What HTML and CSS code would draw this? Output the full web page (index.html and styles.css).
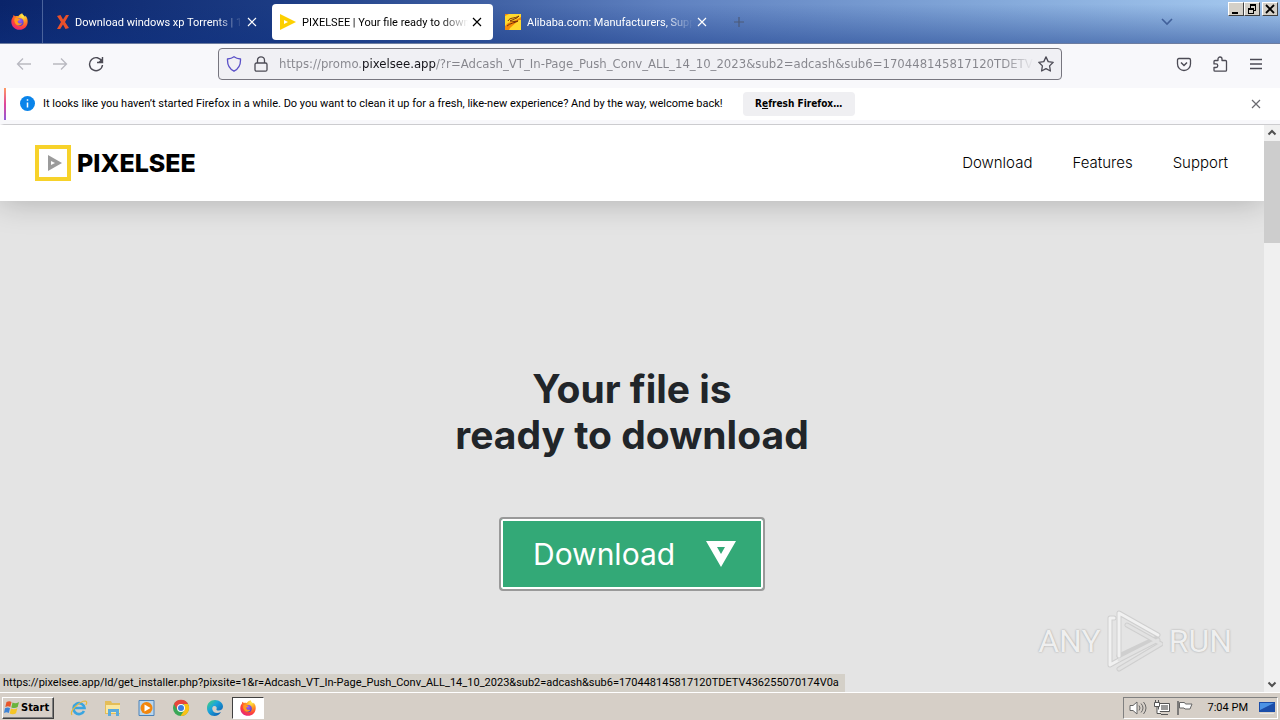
FILE: index.html
```
<!DOCTYPE html>
<html lang="en">
<head>
<meta charset="utf-8">
<title>PIXELSEE | Your file ready to download</title>
<link rel="stylesheet" href="styles.css">
</head>
<body>
<svg class="defs" width="0" height="0" aria-hidden="true">
  <defs>
    <radialGradient id="foxFlame" cx="70%" cy="15%" r="95%"><stop offset="0" stop-color="#fff04a"/><stop offset=".35" stop-color="#ff9a1f"/><stop offset=".7" stop-color="#ff4438"/><stop offset="1" stop-color="#e0208a"/></radialGradient>
    <radialGradient id="foxGlobe" cx="50%" cy="30%" r="70%"><stop offset="0" stop-color="#a05cff"/><stop offset="1" stop-color="#4a3fc4"/></radialGradient>
    <linearGradient id="edge" x1="0" y1="0" x2="1" y2="1"><stop offset="0" stop-color="#4fd66a"/><stop offset=".4" stop-color="#1ba5dc"/><stop offset="1" stop-color="#0b4fa8"/></linearGradient>
    <symbol id="firefox" viewBox="0 0 16 16">
      <path fill="url(#foxFlame)" d="M10.6.3c.3 1.500 1.500 2 2.600 3.200.3-.2.3-.7.2-1.100C15 4 15.800 6 15.700 8.400 15.500 12.700 12.200 15.800 8 15.800S.4 12.600.3 8.400C.2 6.300 1 4.700 2 3.500c0-.7.200-1.300.5-1.700.4.600 1 1 1.500 1.200 1-.3 2-.2 2.900.1C7.600 1.800 9 .7 10.600.3z"/>
      <circle cx="8.200" cy="8.600" r="3.600" fill="url(#foxGlobe)"/>
      <path fill="#ff9a1f" d="M3.400 5.200c1.200-.7 2.400-.5 3.600.3l1.600.4c-.2.800-1 1-1.800 1.300-.6.300-.5 1-.3 1.500.7 1.400 2.600 1.300 3.900.8-.8 2.200-3.300 2.800-5.100 1.700C3.600 10 2.700 7.400 3.400 5.200z"/>
    </symbol>
    <symbol id="close" viewBox="0 0 10 10"><path d="M1 1l8 8M9 1L1 9" fill="none" stroke="currentColor" stroke-width="1.200"/></symbol>
  </defs>
</svg>

<header class="titlebar">
  <button class="fx-view" aria-label="Firefox View"><svg width="17" height="17"><use href="#firefox"/></svg></button>
  <div class="tabs" role="tablist">
    <div class="tab" role="tab">
      <svg width="12" height="14" viewBox="0 0 12 14"><path fill="#e8502a" d="M0 1l3.500-1L6 4.500 9 0h3L8 7l4 6-3.500 1L6 9.500 3.200 14H0l4-7z"/></svg>
      <span class="tab-title">Download windows xp Torrents | 1</span>
      <button class="tab-close" aria-label="Close tab"><svg width="10" height="10"><use href="#close"/></svg></button>
    </div>
    <div class="tab tab-active" role="tab" aria-selected="true">
      <svg width="16" height="16" viewBox="0 0 16 16"><path fill="#fdd000" fill-rule="evenodd" d="M0 0l16 8-16 8zM4 6v4l4-2z"/></svg>
      <span class="tab-title">PIXELSEE | Your file ready to downl</span>
      <button class="tab-close" aria-label="Close tab"><svg width="10" height="10"><use href="#close"/></svg></button>
    </div>
    <div class="tab" role="tab">
      <svg width="16" height="16" viewBox="0 0 16 16"><path fill="#f58a07" d="M0 0h16v16H0z"/><path fill="#ffd92e" d="M0 2l4-2h12v3L9 7 3 9 0 12zM5 14l9-8h2v10H4z"/><path d="M3 7c2-4 6-2 11-5-2 3-6 3-9 5 3 0 5 1 8 0-3 2-8 2-11 5" fill="none" stroke="#7a3008" stroke-width="1"/></svg>
      <span class="tab-title">Alibaba.com: Manufacturers, Supp</span>
      <button class="tab-close" aria-label="Close tab"><svg width="10" height="10"><use href="#close"/></svg></button>
    </div>
    <button class="new-tab" aria-label="New tab"><svg width="10" height="10" viewBox="0 0 10 10"><path d="M5 0v10M0 5h10" stroke="#4c5a78" stroke-width="1.200"/></svg></button>
  </div>
  <button class="all-tabs" aria-label="List all tabs"><svg width="12" height="8" viewBox="0 0 12 8"><path d="M1 1l5 5 5-5" fill="none" stroke="#41609a" stroke-width="1.600"/></svg></button>
  <div class="window-buttons">
    <button aria-label="Minimize"><svg width="12" height="10" viewBox="0 0 12 10"><path d="M2 8h6v2H2z"/></svg></button>
    <button aria-label="Restore"><svg width="12" height="10" viewBox="0 0 12 10"><path fill-rule="evenodd" d="M4 0h6v7H8v3H2V4h2zM5 2v2h3v2h1V2zM3 6v3h4V6z"/></svg></button>
    <button class="window-close" aria-label="Close"><svg width="12" height="10" viewBox="0 0 12 10"><path d="M2 1l8 8M10 1L2 9" stroke="#000" stroke-width="1.800"/></svg></button>
  </div>
</header>

<nav class="toolbar" aria-label="Navigation">
  <div class="nav-buttons">
    <button class="dim" aria-label="Back"><svg width="16" height="16" viewBox="0 0 16 16"><path d="M15 8H2M7 2.500L1.500 8 7 13.500"/></svg></button>
    <button class="dim" aria-label="Forward"><svg width="16" height="16" viewBox="0 0 16 16"><path d="M1 8h13M9 2.500L14.500 8 9 13.500"/></svg></button>
    <button aria-label="Reload"><svg width="16" height="16" viewBox="0 0 16 16"><path d="M14 5.500A6.500 6.500 0 1 0 14.500 9M14.500 1v5.500H9" stroke-width="1.400"/><path d="M14.500 2v4.500H10z" fill="currentColor" stroke="none"/></svg></button>
  </div>
  <div class="urlbar">
    <svg class="shield" width="16" height="16" viewBox="0 0 16 16"><path d="M8 .8c2 1.500 4.200 2 6.500 2.200.3 6-2 10-6.500 12.200C3.500 13 1.200 9 1.500 3 3.800 2.800 6 2.300 8 .8z"/></svg>
    <svg class="lock" width="14" height="16" viewBox="0 0 14 16"><rect x="1" y="7" width="12" height="8.200" rx="1.500"/><path d="M3.500 7V4.300a3.500 3.500 0 0 1 7 0V7"/></svg>
    <input type="text" aria-label="Address" value="https://promo.pixelsee.app/?r=Adcash_VT_In-Page_Push_Conv_ALL_14_10_2023&amp;sub2=adcash&amp;sub6=170448145817120TDETV436255070174V0a">
    <button aria-label="Bookmark"><svg width="16" height="16" viewBox="0 0 16 16"><path stroke-linejoin="round" d="M8 .9l2.200 4.700 5 .7-3.600 3.600.8 5.100L8 12.600 3.600 15l.8-5.100L.8 6.300l5-.7z"/></svg></button>
  </div>
  <div class="nav-buttons nav-end">
    <button aria-label="Save to Pocket"><svg width="16" height="16" viewBox="0 0 16 16"><path d="M3 2.500h10c1 0 1.500.6 1.500 1.500v4a6.500 6.500 0 0 1-13 0V4c0-.9.500-1.500 1.500-1.500z"/><path d="M5 6.500l3 3 3-3" stroke-width="1.500"/></svg></button>
    <button aria-label="Extensions"><svg width="16" height="16" viewBox="0 0 16 16"><path stroke-linejoin="round" d="M3 4.500h3V3a2 2 0 0 1 4 0v1.500h3.500c.6 0 1 .4 1 1v8.700c0 .6-.4 1-1 1H3c-.6 0-1-.4-1-1v-2.700h2a1.800 1.800 0 0 0 0-3.600H2V5.500c0-.6.400-1 1-1z"/></svg></button>
    <button aria-label="Menu"><svg width="16" height="16" viewBox="0 0 16 16"><path d="M2 3.500h12M2 8h12M2 12.500h12"/></svg></button>
  </div>
</nav>

<div class="notice">
  <svg width="15" height="15" viewBox="0 0 15 15"><circle cx="7.500" cy="7.500" r="7.500" fill="#0a84ea"/><path d="M7.500 3.200v1.600M7.500 6.400v5.200" stroke="#fff" stroke-width="1.500"/></svg>
  <span>It looks like you haven’t started Firefox in a while. Do you want to clean it up for a fresh, like-new experience? And by the way, welcome back!</span>
  <button class="refresh">R<u>e</u>fresh Firefox…</button>
  <button class="notice-close" aria-label="Dismiss"><svg width="10" height="10"><use href="#close"/></svg></button>
</div>

<div class="viewport">
  <div class="page">
    <header class="site-header">
      <a class="logo" href="#">
        <svg width="36" height="36" viewBox="0 0 36 36"><path d="M2 2h32v32H2z" fill="#fff" stroke="#f7d22a" stroke-width="4"/><path fill="#9b9b9b" fill-rule="evenodd" d="M13 10l14 8-14 8zM16 16v4l4-2z"/></svg>
        <span>PIXELSEE</span>
      </a>
      <nav class="site-nav" aria-label="Site">
        <a href="#">Download</a><a href="#">Features</a><a href="#">Support</a>
      </nav>
    </header>
    <main class="hero">
      <h1>Your file is<br>ready to download</h1>
      <a class="download" href="#"><span>Download</span>
        <svg width="30" height="26" viewBox="0 0 30 26"><path fill="#fff" fill-rule="evenodd" d="M0 0h30L15 26zM11 6l4 7 4-7z"/></svg>
      </a>
    </main>
    <div class="watermark">
      <span>ANY</span>
      <svg width="56" height="62" viewBox="0 0 56 62"><g fill="none" stroke-linejoin="round" stroke-linecap="round"><g stroke="#cfcfcf" stroke-width="5"><path d="M51 25L12 3v43"/><path d="M7 8H3v47l9-5 39-20M12 46l38-18M12 59l42-25L20 15"/></g><g stroke="#f1f1f1" stroke-width="3"><path d="M51 25L12 3v43"/><path d="M7 8H3v47l9-5"/></g><g stroke="#e2e2e2" stroke-width="3"><path d="M12 50l39-20M12 59l42-25L20 15"/></g></g></svg>
      <span>RUN</span>
    </div>
    <div class="status">https://pixelsee.app/ld/get_installer.php?pixsite=1&amp;r=Adcash_VT_In-Page_Push_Conv_ALL_14_10_2023&amp;sub2=adcash&amp;sub6=170448145817120TDETV436255070174V0a</div>
  </div>
  <div class="scrollbar" aria-hidden="true">
    <svg width="16" height="16" viewBox="0 0 16 16"><path d="M4.500 9.500L8 6l3.500 3.500" fill="none" stroke="#505050" stroke-width="2"/></svg>
    <div class="thumb"></div>
    <svg class="down" width="16" height="16" viewBox="0 0 16 16"><path d="M4.500 6.500L8 10l3.500-3.500" fill="none" stroke="#505050" stroke-width="2"/></svg>
  </div>
</div>

<footer class="taskbar">
  <button class="start"><svg width="16" height="16" viewBox="0 0 16 16"><path fill="#e8562a" d="M2.500 2c2-1 3.500-1 5 0L6.300 7c-1.500-.9-3-.9-5 0z"/><path fill="#6ab43c" d="M8.500 2.500c2 1 4 1 6.500-.5l-1.300 5c-2 1.400-4.200 1.400-6.400.4z"/><path fill="#3d83d6" d="M1 8.200c2-1 3.500-1 5 0L4.800 13c-1.500-1-3-1-4.800 0z"/><path fill="#f5c525" d="M7 8.600c2 1 4 1 6.400-.4L12 13.200c-2 1.300-4.200 1.300-6.300.3z"/></svg>Start</button>
  <div class="quick">
    <button aria-label="Internet Explorer"><svg width="18" height="18" viewBox="0 0 18 18"><path d="M14 12a5.500 5.500 0 1 1 .5-3H5" fill="none" stroke="#3aa5e0" stroke-width="2.600"/><path d="M2 16C-1 12 10 2 15.500 2c2 .5 1 3 .3 4" fill="none" stroke="#e6b93c" stroke-width="1.200"/></svg></button>
    <button aria-label="Explorer"><svg width="18" height="18" viewBox="0 0 18 18"><path fill="#e4bd58" d="M1 2h6l1 2h8v11H1z"/><path fill="#fae7a0" d="M2 6h14v8H2z"/><path fill="#5cabdc" d="M4 10h11v7h-3v-4H7v4H4z"/></svg></button>
    <button aria-label="Media Player"><svg width="18" height="18" viewBox="0 0 18 18"><path fill="#b9d6ee" stroke="#4c82b8" d="M1 1.500h15v15H1z"/><circle cx="8.500" cy="9" r="6" fill="#f2860d"/><path fill="#fff" d="M6.500 5.500l6 3.500-6 3.500z"/></svg></button>
    <button aria-label="Chrome"><svg width="18" height="18" viewBox="0 0 18 18"><circle cx="9" cy="9" r="8" fill="#3aa757"/><path fill="#e8453c" d="M2 5a8 8 0 0 1 14 0H9L5.500 11z"/><path fill="#fbc116" d="M16 5a8 8 0 0 1-7.500 12l4-6L12 5z"/><circle cx="9" cy="9" r="4" fill="#fff"/><circle cx="9" cy="9" r="3" fill="#3b7de0"/></svg></button>
    <button aria-label="Edge"><svg width="18" height="18" viewBox="0 0 18 18"><path fill="url(#edge)" d="M1 9C1 4 4.500 1 9 1s8 3 8 6.500c0 2.500-2 4-4.500 4-1.600 0-2.500-.6-2-1.500.8-1.500-.3-3-2-3-2 0-2.700 2-2 4 1 3 4.500 4 8.500 2-1.500 2.700-4 4-6.500 4C4 17 1 13.500 1 9z"/></svg></button>
    <button class="running" aria-label="Firefox"><svg width="16" height="16"><use href="#firefox"/></svg></button>
  </div>
  <div class="tray">
    <svg width="18" height="16" viewBox="0 0 18 16" fill="none" stroke="#666"><path fill="#fff" d="M1 5.500h3L8 2v12l-4-3.500H1z"/><path d="M10 5.500q2 2.500 0 5M12 3.500q4 4.500 0 9M14.500 2q5 6 0 12"/></svg>
    <svg width="16" height="16" viewBox="0 0 16 16"><path fill="#fff" stroke="#555" d="M4.500 3.500h11v8h-11zM7 14.500h7"/><path fill="#999" d="M7 5h7v5H7z"/><path fill="#fff" stroke="#555" d="M.5 2.500h5v4h-5zM1.500 0v2M4.500 0v2M3 7v6.500h4"/></svg>
    <svg width="16" height="16" viewBox="0 0 16 16" fill="#fff" stroke="#666"><path d="M1 1v14" stroke-width="1.600"/><path d="M2.500 2.500h5l1 1.500H15l-2 5H8L7 8H2.500z"/></svg>
    <time>7:04 PM</time>
    <svg width="16" height="14" viewBox="0 0 16 14"><path fill="#1b4da8" d="M0 1h16v10H0z"/><path fill="#4b92e4" d="M1 2h14L1 9z"/><path fill="#e6e6e6" d="M1 12h14v1H1z"/></svg>
  </div>
</footer>
</body>
</html>
```
FILE: styles.css
```
* { box-sizing: border-box; }

body {
  margin: 0;
  height: 100vh;
  display: flex;
  flex-direction: column;
  overflow: hidden;
  font: 11px/16px Roboto, "Liberation Sans", sans-serif;
  color: #000;
}

.defs { position: absolute; }
svg { display: block; flex: none; }
button { font: inherit; color: inherit; border: 0; padding: 0; margin: 0; background: none; flex: none; }
a { color: inherit; text-decoration: none; }

.titlebar {
  display: flex;
  flex: none;
  height: 44px;
  border-bottom: 1px solid #6d7da0;
  color: #fff;
  background:
    linear-gradient(to bottom, transparent 10%, rgba(15, 50, 130, .45)),
    linear-gradient(to right, #0a246a 0%, #1c3c84 22%, #5f81c0 52%, #84a9da 78%, #a6caf0 100%);
}
.fx-view {
  width: 43px;
  padding-right: 3px;
  display: flex;
  align-items: center;
  justify-content: center;
  border-right: 1px solid #4a639c;
}
.tabs { flex: 1; display: flex; padding: 4px; gap: 4px; min-width: 0; }
.tab {
  width: 221px;
  height: 36px;
  padding: 0 11px 0 8px;
  display: flex;
  align-items: center;
  border-radius: 4px;
}
.tab:first-child { padding-left: 10px; }
.tab-title {
  flex: 1;
  padding-top: 1px;
  margin: 0 4px 0 6px;
  overflow: hidden;
  white-space: nowrap;
  -webkit-mask-image: linear-gradient(to left, transparent, #000 28px);
  mask-image: linear-gradient(to left, transparent, #000 28px);
}
.tab-active { background: #fff; color: #000; }
.new-tab { width: 34px; display: flex; align-items: center; justify-content: center; }
.all-tabs { width: 32px; display: flex; align-items: center; justify-content: center; margin-right: 45px; }
.window-buttons { display: flex; padding: 2px 2px 0 0; height: 18px; }
.window-buttons button {
  width: 16px;
  height: 14px;
  background: #d4d0c8;
  border: 1px solid;
  border-color: #fff #404040 #404040 #fff;
  display: flex;
  align-items: center;
  justify-content: center;
}
.window-buttons .window-close { margin-left: 2px; }

.toolbar {
  flex: none;
  height: 44px;
  display: flex;
  align-items: center;
  justify-content: space-between;
  background: #f8f8fb;
  color: #4c4b55;
  padding: 0 16px 4px;
}
.toolbar svg { fill: none; stroke: currentColor; stroke-width: 1.3; }
.nav-buttons { display: flex; gap: 20px; width: 192px; }
.nav-end { justify-content: flex-end; }
.toolbar .dim { color: #b9b9c0; }
.urlbar {
  flex: 1;
  max-width: 844px;
  height: 32px;
  margin: 0 10px;
  padding: 0 7px;
  display: flex;
  align-items: center;
  gap: 12px;
  border: 1px solid #77767f;
  border-radius: 4px;
  background: #f0f0f4;
}
.urlbar .shield { stroke: #5a50c8; }
.urlbar input {
  flex: 1;
  min-width: 0;
  height: 24px;
  margin-right: -8px;
  margin-left: -1px;
  padding: 0;
  border: 0;
  outline: 0;
  font: 13px/24px "DejaVu Sans Condensed", "DejaVu Sans", sans-serif;
  color: transparent;
  background: linear-gradient(to right, #85858c 83px, #15141a 83px, #15141a 157px, #85858c 157px, #85858c calc(100% - 30px), transparent);
  -webkit-background-clip: text;
  background-clip: text;
}

.notice {
  flex: none;
  height: 37px;
  display: flex;
  align-items: center;
  padding: 0 19px 5px 16px;
  border-left: 4px solid #f8f8fb;
  border-bottom: 1px solid #cccccf;
  background:
    linear-gradient(#f8f8fb, #f8f8fb) bottom / 100% 4px no-repeat,
    linear-gradient(to bottom, #ff9a62, #e0459a 50%, #9059d8) left top / 2px 32px no-repeat,
    #fff;
}
.notice span { margin: 0 20px 0 8px; white-space: nowrap; }
.refresh {
  height: 24px;
  width: 112px;
  font: bold 10px/16px "DejaVu Sans Condensed", sans-serif;
  background: #efeff2;
  border-radius: 4px;
}
.notice-close { margin-left: auto; color: #6a6a70; }

.viewport { flex: 1; display: flex; min-height: 0; }
.page {
  flex: 1;
  position: relative;
  display: flex;
  flex-direction: column;
  background: #e4e4e4;
  overflow: hidden;
}
.site-header {
  height: 76px;
  flex: none;
  display: flex;
  align-items: center;
  justify-content: space-between;
  padding: 0 36px 0 35px;
  background: #fff;
  box-shadow: 0 0 32px rgba(0, 0, 0, .25);
}
.logo {
  display: flex;
  align-items: center;
  gap: 6px;
  font: 800 25px/36px Inter, sans-serif;
}
.site-nav { display: flex; gap: 40px; font: 300 15px/24px Inter, sans-serif; }
.hero { display: flex; flex-direction: column; align-items: center; padding-top: 165px; }
h1 {
  margin: 0;
  text-align: center;
  font: 700 39px/46px Inter, sans-serif;
  color: #212529;
}
.download {
  margin-top: 59px;
  width: 266px;
  height: 74px;
  display: flex;
  align-items: center;
  justify-content: space-between;
  padding: 0 27px 0 32px;
  color: #fff;
  background: #33a977;
  border: 2px solid #999;
  border-radius: 4px;
  box-shadow: inset 0 0 0 2px #fff;
  font: 400 30px/40px Inter, sans-serif;
}
.watermark {
  position: absolute;
  right: 32px;
  bottom: 20px;
  display: flex;
  align-items: center;
  gap: 6px;
  color: #efefef;
  text-shadow: 0 0 2px #999;
  font: 32px/62px Roboto, sans-serif;
}
.status {
  position: absolute;
  left: 0;
  bottom: 0;
  padding: 1px 6px 1px 3px;
  background: #d4d0c8;
  white-space: nowrap;
}

.scrollbar { width: 16px; flex: none; display: flex; flex-direction: column; background: #f0f0f0; }
.thumb { height: 102px; background: #cdcdcd; }
.down { margin-top: auto; }

.taskbar {
  flex: none;
  height: 28px;
  display: flex;
  align-items: center;
  padding: 3px 2px 1px;
  background: #d6cfc7;
  border-top: 1px solid #fff;
}
.start {
  width: 52px;
  height: 22px;
  display: flex;
  align-items: center;
  gap: 1px;
  padding-left: 1px;
  font: bold 11px/16px "DejaVu Sans Condensed", sans-serif;
  border: 1px solid;
  border-color: #fff #404040 #404040 #fff;
  box-shadow: inset -1px -1px #808080;
}
.quick { display: flex; margin-left: 8px; }
.quick button { width: 34px; height: 22px; display: flex; align-items: center; justify-content: center; }
.quick .running { width: 32px; background: #fff; border: 1px solid; border-color: #404040 #fff #fff #404040; }
.tray {
  margin-left: auto;
  height: 22px;
  display: flex;
  align-items: center;
  gap: 7px;
  padding: 0 2px 0 5px;
  border: 1px solid;
  border-color: #808080 #fff #fff #808080;
}
.tray time { margin: 0 4px 0 8px; }
```
